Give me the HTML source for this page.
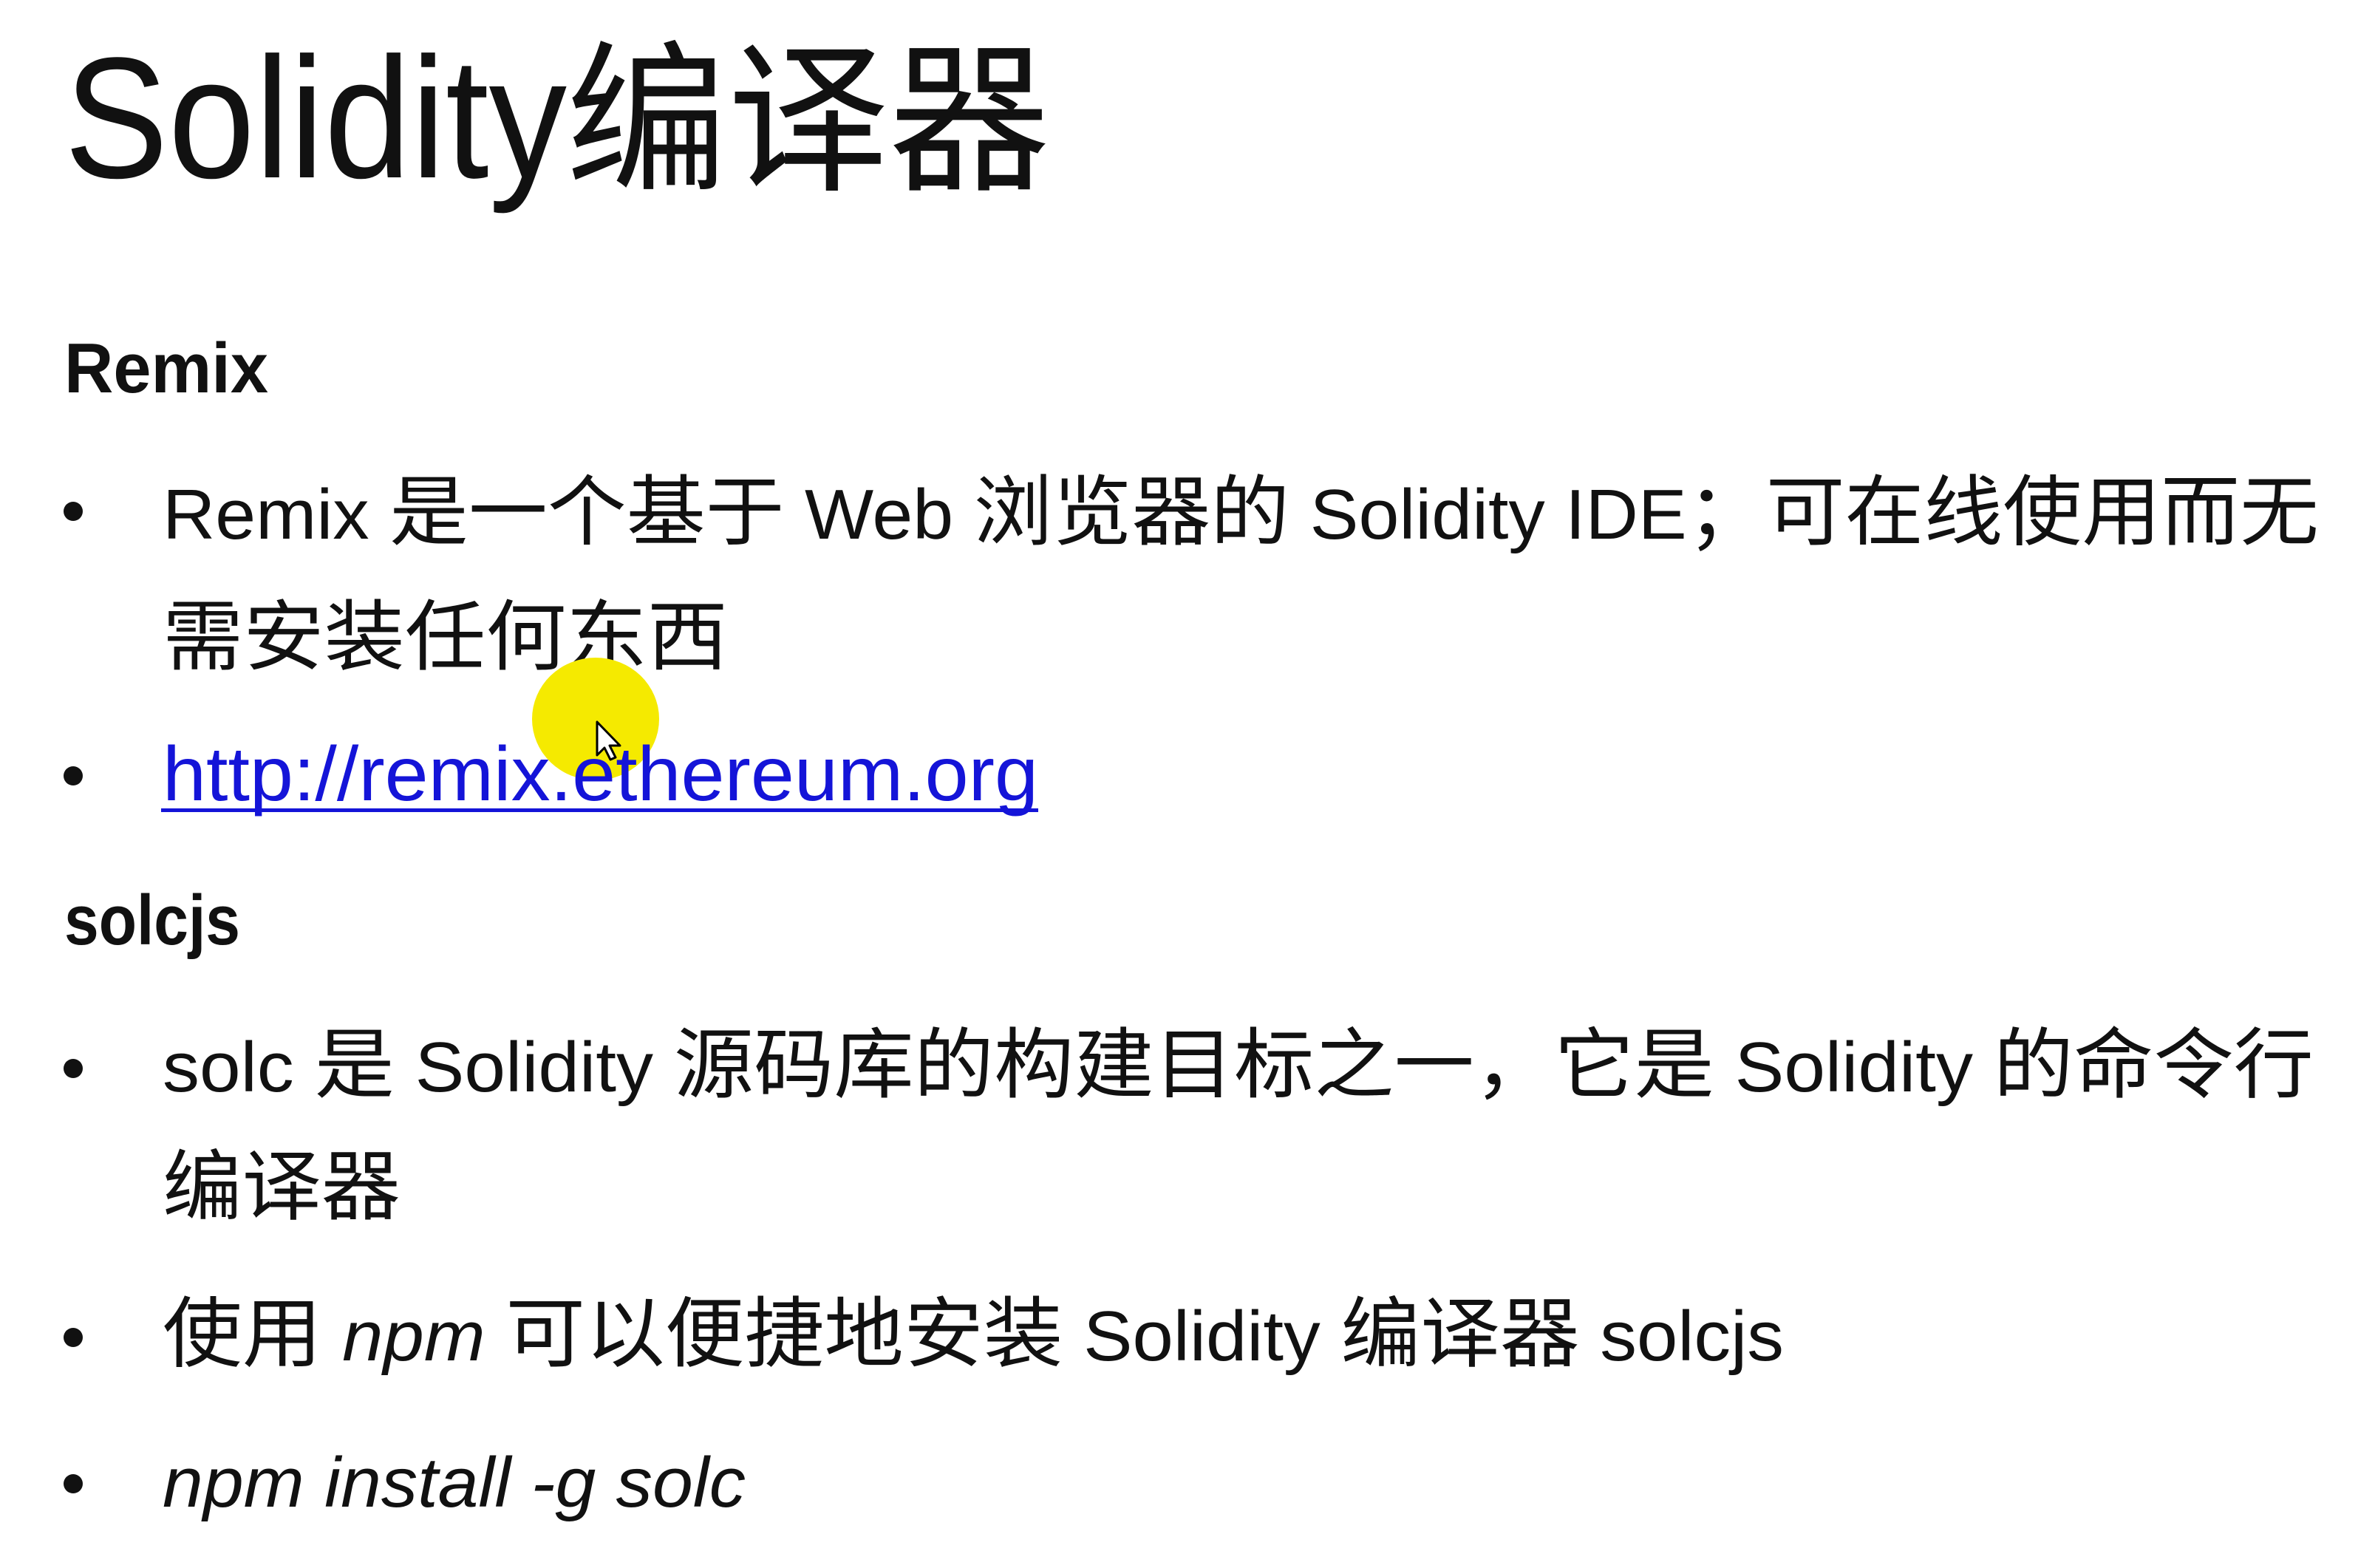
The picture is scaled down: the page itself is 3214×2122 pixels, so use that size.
<!DOCTYPE html>
<html><head><meta charset="utf-8"><style>
html,body{margin:0;padding:0;background:#fff;width:3214px;height:2122px;overflow:hidden}
svg{display:block}
text{font-family:"Liberation Sans","Noto Sans CJK SC",sans-serif;fill:#111}
.c{font-family:"Noto Sans CJK SC","WenQuanYi Zen Hei",sans-serif}
</style></head><body>
<svg width="3214" height="2122" viewBox="0 0 3214 2122" xmlns="http://www.w3.org/2000/svg">
<text x="87" y="240" font-size="233" textLength="680" lengthAdjust="spacingAndGlyphs" style="font-weight:300">Solidity</text>
<text x="766" y="240" font-size="220" class="c" textLength="655" lengthAdjust="spacingAndGlyphs">编译器</text>

<text x="87" y="531" font-size="96" font-weight="bold" textLength="276" lengthAdjust="spacingAndGlyphs">Remix</text>

<circle cx="99" cy="692" r="13" fill="#111"/>
<text x="220" y="729" font-size="96" textLength="2918" lengthAdjust="spacingAndGlyphs">Remix <tspan class="c" font-size="104">是一个基于</tspan> Web <tspan class="c" font-size="104">浏览器的</tspan> Solidity IDE<tspan class="c" font-size="104">；可在线使用而无</tspan></text>
<text x="220" y="898" font-size="104" class="c" textLength="765" lengthAdjust="spacingAndGlyphs">需安装任何东西</text>

<ellipse cx="806" cy="973" rx="86" ry="83" fill="#f5ea00"/>
<circle cx="99" cy="1050" r="13" fill="#111"/>
<text x="220" y="1083" font-size="104" style="fill:#1414d8" textLength="1185" lengthAdjust="spacingAndGlyphs">http://remix.ethereum.org</text>
<rect x="218" y="1094" width="1187" height="5" fill="#1414d8"/>
<path d="M808 977 L808 1022 L818 1012 L826 1028 L833 1025 L825 1009 L839 1009 Z" fill="#fff" stroke="#000" stroke-width="3" stroke-linejoin="round"/>

<text x="87" y="1278" font-size="96" font-weight="bold" textLength="238" lengthAdjust="spacingAndGlyphs">solcjs</text>

<circle cx="99" cy="1446" r="13" fill="#111"/>
<text x="220" y="1477" font-size="96" textLength="2911" lengthAdjust="spacingAndGlyphs">solc <tspan class="c" font-size="104">是</tspan> Solidity <tspan class="c" font-size="104">源码库的构建目标之一，它是</tspan> Solidity <tspan class="c" font-size="104">的命令行</tspan></text>
<text x="220" y="1642" font-size="104" class="c" textLength="322" lengthAdjust="spacingAndGlyphs">编译器</text>

<circle cx="99" cy="1810" r="13" fill="#111"/>
<text x="220" y="1841" font-size="96" textLength="2194" lengthAdjust="spacingAndGlyphs"><tspan class="c" font-size="104">使用</tspan> <tspan font-style="italic">npm</tspan> <tspan class="c" font-size="104">可以便捷地安装</tspan> Solidity <tspan class="c" font-size="104">编译器</tspan> solcjs</text>

<circle cx="99" cy="2008" r="13" fill="#111"/>
<text x="220" y="2039" font-size="96" font-style="italic" textLength="789" lengthAdjust="spacingAndGlyphs">npm install -g solc</text>
</svg>
</body></html>
